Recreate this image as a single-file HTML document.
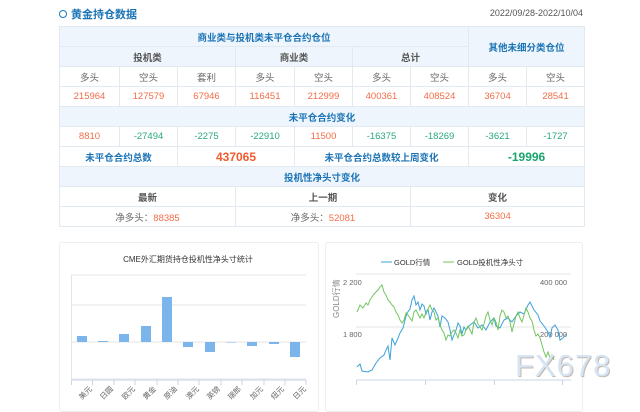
<!DOCTYPE html>
<html><head><meta charset="utf-8"><style>
*{margin:0;padding:0;box-sizing:border-box}
body{width:640px;height:400px;background:#fff;font-family:"Liberation Sans","Noto Sans CJK SC",sans-serif;position:relative;overflow:hidden}
.title{position:absolute;left:59px;top:6px;font-size:11px;font-weight:bold;color:#1a73b5;display:flex;align-items:center}
.title i{display:inline-block;width:8px;height:8px;border:1.5px solid #1a7bbf;border-radius:50%;margin-right:4px}
.date{position:absolute;right:57px;top:8px;font-size:9px;color:#555}
table{position:absolute;left:59px;top:26px;width:525px;border-collapse:collapse;table-layout:fixed}
td{height:20px;border:1px solid #e3e9f0;text-align:center;font-size:9.5px;color:#666;padding:0;white-space:nowrap}
.h{background:#eef5fc;color:#1a73b5;font-weight:bold;font-size:9.5px}
.g{background:#eef5fc;color:#555;font-weight:bold}
.o{color:#f26d47}.n{color:#2aa780}
.bo{color:#f05a2c;font-weight:bold;font-size:12px}.bn{color:#1aa46e;font-weight:bold;font-size:12px}
.b{color:#1a73b5;font-weight:bold}
.lb{font-weight:bold;color:#555}
.panel{position:absolute;top:242px;height:170px;border:1px solid #eee;border-radius:3px}
</style></head><body>
<div class="title"><i></i>黄金持仓数据</div>
<div class="date">2022/09/28-2022/10/04</div>
<table>
<colgroup><col style="width:60px"><col style="width:58px"><col style="width:58px"><col style="width:59px"><col style="width:58px"><col style="width:58px"><col style="width:58px"><col style="width:58px"><col style="width:58px"></colgroup>
<tr><td colspan="7" class="h">商业类与投机类未平仓合约仓位</td><td colspan="2" rowspan="2" class="h">其他未细分类仓位</td></tr>
<tr><td colspan="3" class="g">投机类</td><td colspan="2" class="g">商业类</td><td colspan="2" class="g">总计</td></tr>
<tr><td>多头</td><td>空头</td><td>套利</td><td>多头</td><td>空头</td><td>多头</td><td>空头</td><td>多头</td><td>空头</td></tr>
<tr><td class="o">215964</td><td class="o">127579</td><td class="o">67946</td><td class="o">116451</td><td class="o">212999</td><td class="o">400361</td><td class="o">408524</td><td class="o">36704</td><td class="o">28541</td></tr>
<tr><td colspan="9" class="h">未平仓合约变化</td></tr>
<tr><td class="o">8810</td><td class="n">-27494</td><td class="n">-2275</td><td class="n">-22910</td><td class="o">11500</td><td class="n">-16375</td><td class="n">-18269</td><td class="n">-3621</td><td class="n">-1727</td></tr>
<tr><td colspan="2" class="b">未平仓合约总数</td><td colspan="2" class="bo">437065</td><td colspan="3" class="b">未平仓合约总数较上周变化</td><td colspan="2" class="bn">-19996</td></tr>
<tr><td colspan="9" class="h">投机性净头寸变化</td></tr>
<tr><td colspan="3" class="lb">最新</td><td colspan="3" class="lb">上一期</td><td colspan="3" class="lb">变化</td></tr>
<tr><td colspan="3">净多头：<span class="o">88385</span></td><td colspan="3">净多头：<span class="o">52081</span></td><td colspan="3" class="o">36304</td></tr>
</table>
<div class="panel" style="left:59px;width:260px"></div>
<div class="panel" style="left:325px;width:258px"></div>
<svg width="640" height="400" style="position:absolute;left:0;top:0" font-family="Liberation Sans,Noto Sans CJK SC,sans-serif">
<text x="188" y="262" font-size="8" text-anchor="middle" fill="#333">CME外汇期货持仓投机性净头寸统计</text>
<g stroke="#e6e6e6" stroke-width="1">
<line x1="71" y1="275" x2="306" y2="275"/><line x1="71" y1="305" x2="306" y2="305"/><line x1="71" y1="342" x2="306" y2="342"/><line x1="71" y1="379" x2="306" y2="379"/>
<line x1="71.5" y1="275" x2="71.5" y2="379"/>
</g>
<g stroke="#ccd6eb"><line x1="71" y1="380" x2="306" y2="380"/>
<line x1="71.5" y1="380" x2="71.5" y2="385"/><line x1="92.5" y1="380" x2="92.5" y2="385"/><line x1="114" y1="380" x2="114" y2="385"/><line x1="135" y1="380" x2="135" y2="385"/><line x1="157" y1="380" x2="157" y2="385"/><line x1="178" y1="380" x2="178" y2="385"/><line x1="199" y1="380" x2="199" y2="385"/><line x1="221" y1="380" x2="221" y2="385"/><line x1="242" y1="380" x2="242" y2="385"/><line x1="264" y1="380" x2="264" y2="385"/><line x1="285" y1="380" x2="285" y2="385"/><line x1="306" y1="380" x2="306" y2="385"/></g>
<g fill="#7cb5ec">
<rect x="77" y="336" width="10" height="6"/><rect x="98" y="341" width="10" height="1"/><rect x="119" y="334" width="10" height="8"/><rect x="141" y="326" width="10" height="16"/><rect x="162" y="297" width="10" height="45"/><rect x="183" y="342" width="10" height="5"/><rect x="205" y="342" width="10" height="10"/><rect x="226" y="342" width="10" height="1" fill="#b8d6f5"/><rect x="247" y="342" width="10" height="4"/><rect x="269" y="342" width="10" height="2"/><rect x="290" y="342" width="10" height="15"/>
</g>
<g font-size="7.5" fill="#666">
<text transform="translate(82,400) rotate(-45)">美元</text><text transform="translate(103,400) rotate(-45)">日圆</text><text transform="translate(125,400) rotate(-45)">欧元</text><text transform="translate(146,400) rotate(-45)">黄金</text><text transform="translate(167,400) rotate(-45)">原油</text><text transform="translate(189,400) rotate(-45)">澳元</text><text transform="translate(210,400) rotate(-45)">英镑</text><text transform="translate(231,400) rotate(-45)">瑞郎</text><text transform="translate(253,400) rotate(-45)">加元</text><text transform="translate(274,400) rotate(-45)">纽元</text><text transform="translate(296,400) rotate(-45)">日元</text>
</g>
<g font-size="7.5" fill="#333"><line x1="381" y1="262" x2="392" y2="262" stroke="#3ba1db"/><text x="394" y="265">GOLD行情</text>
<line x1="443" y1="262" x2="454" y2="262" stroke="#70c75e"/><text x="457" y="265">GOLD投机性净头寸</text></g>
<g stroke="#e6e6e6"><line x1="356" y1="274" x2="571" y2="274"/><line x1="356" y1="327" x2="571" y2="327"/></g>
<g stroke="#ccd6eb"><line x1="356" y1="380" x2="571" y2="380"/><line x1="356.5" y1="380" x2="356.5" y2="385"/><line x1="425.5" y1="380" x2="425.5" y2="385"/><line x1="494.5" y1="380" x2="494.5" y2="385"/><line x1="562.5" y1="380" x2="562.5" y2="385"/></g>
<g font-size="7.5" fill="#666"><text x="343" y="285">2 200</text><text x="343" y="337">1 800</text><text x="540" y="285">400 000</text><text x="540" y="337">200 000</text>
<text transform="translate(339,318) rotate(-90)" font-size="8" fill="#888">GOLD行情</text></g>
<polyline fill="none" stroke="#3ba1db" stroke-width="1" points="357,367 360,364 362,371 368,372 372,370 376,363 380,358 384,355 386,350 388,346 390,360 392,338 395,345 398,338 400,333 403,328 405,320 407,313 410,309 412,300 414,296 416,305 418,302 420,310 422,304 424,306 426,314 428,309 430,320 432,312 434,308 436,312 438,316 440,327 442,316 445,318 448,322 450,330 452,340 454,335 456,330 458,323 460,326 462,334 464,327 466,330 470,325 474,322 478,328 482,325 486,330 490,322 494,318 496,326 500,328 504,320 508,318 512,322 516,316 520,312 524,314 528,305 530,302 534,310 538,315 540,321 544,326 548,332 550,337 552,328 555,325 558,330 560,340 563,338 566,334"/>
<polyline fill="none" stroke="#70c75e" stroke-width="1" points="357,312 360,305 363,308 366,303 368,305 370,300 372,297 374,294 376,292 378,290 380,287 382,285 384,292 386,295 388,300 390,302 392,305 394,307 396,312 398,315 400,320 402,323 404,320 406,313 408,315 410,318 412,321 414,312 416,310 418,314 420,318 422,314 424,318 426,312 428,309 430,305 432,310 434,312 436,320 438,318 440,325 442,330 444,333 446,340 448,335 450,336 452,332 454,330 456,333 458,338 460,330 462,336 464,335 466,330 468,326 470,330 472,334 474,322 476,318 478,324 480,327 482,330 484,324 486,316 488,312 490,320 492,325 494,318 496,322 498,330 500,316 502,310 504,312 506,318 508,316 510,322 512,332 514,324 516,316 518,312 520,318 522,322 524,315 526,308 528,312 530,318 532,321 534,330 536,336 538,334 540,338 542,345 544,352 546,357 548,352 550,358 552,355 554,360"/>
<text x="516" y="377" font-size="31" fill="#a08a78" opacity="0.6" letter-spacing="1">FX678</text>
<text x="515" y="376" font-size="31" fill="#d6e4f4" letter-spacing="1">FX678</text>
</svg>
</body></html>
